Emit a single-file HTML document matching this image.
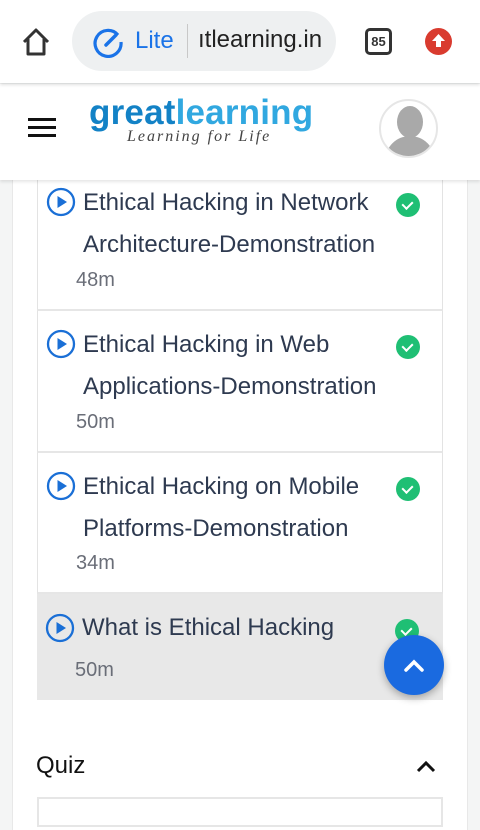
<!DOCTYPE html>
<html><head><meta charset="utf-8"><style>
*{margin:0;padding:0;box-sizing:border-box}
body{width:480px;height:815px;overflow:hidden;background:#f4f5f5;font-family:"Liberation Sans",sans-serif;position:relative}
.bar{position:absolute;left:0;top:0;width:480px;height:83px;background:#fff;z-index:3;box-shadow:0 2px 3px rgba(0,0,0,.12)}
.url{position:absolute;left:72px;top:11px;width:264px;height:60px;border-radius:30px;background:#eef0f1}
.hdr{position:absolute;left:0;top:84px;width:480px;height:96px;background:#fff;z-index:2;box-shadow:0 2px 3px rgba(0,0,0,.1)}
.card{position:absolute;left:12px;top:170px;width:456px;height:660px;background:#fff;border-left:1px solid #e8e8e8;border-right:1px solid #e8e8e8}
.list{position:absolute;left:37px;top:170px;width:406px}
.item{position:relative;border:1px solid #e3e3e3;border-top:none;border-bottom:2px solid #e6e6e6}
.t{position:absolute;left:45px;font-size:24px;color:#2e3a50;line-height:42px;white-space:nowrap}
.d{position:absolute;left:38px;font-size:20px;color:#6a6e78}
.play{position:absolute;left:8px;width:30px;height:30px}
.chk{position:absolute;left:358px;width:24px;height:24px;border-radius:50%;background:#1fbf74}
.chk:after{content:"";position:absolute;left:8px;top:6px;width:5px;height:8px;border:solid #fff;border-width:0 2px 2px 0;transform:rotate(45deg)}
</style></head><body>
<div class="bar">
<svg style="position:absolute;left:20px;top:26px" width="32" height="32" viewBox="0 0 32 32"><path d="M4 16 L16 4 L28 16 M8 13 V28 H24 V13" fill="none" stroke="#333" stroke-width="3" stroke-linejoin="round"/></svg>
<div class="url">
<svg style="position:absolute;left:20px;top:15px" width="32" height="32" viewBox="0 0 32 32"><path d="M26 9 A13 13 0 1 0 29 16" fill="none" stroke="#1a73e8" stroke-width="3.2"/><path d="M14 19 L24 9" stroke="#1a73e8" stroke-width="3.5" stroke-linecap="round"/></svg>
<span style="position:absolute;left:63px;top:16px;font-size:24px;color:#1a73e8">Lite</span>
<div style="position:absolute;left:115px;top:13px;width:1px;height:34px;background:#c8c8c8"></div>
<span style="position:absolute;left:126px;top:15px;font-size:24px;color:#222">ıtlearning.in</span>
</div>
<div style="position:absolute;left:365px;top:28px;width:27px;height:27px;border:3px solid #333;border-radius:5px;font-size:13px;font-weight:bold;text-align:center;line-height:21px;color:#333">85</div>
<div style="position:absolute;left:425px;top:28px;width:27px;height:27px;border-radius:50%;background:#d93b2f"><svg width="27" height="27" viewBox="0 0 27 27"><path d="M13.5 6 L20 13 H16 V19 H11 V13 H7 Z" fill="#fff"/></svg></div>
</div>
<div class="hdr">
<div style="position:absolute;left:28px;top:34px;width:28px;height:3px;background:#111;box-shadow:0 8px 0 #111,0 16px 0 #111"></div>
<div style="position:absolute;left:89px;top:9px;font-size:35px;font-weight:bold;letter-spacing:0.2px;color:#1382c6">great<span style="color:#31a8e0">learning</span></div>
<div style="position:absolute;left:127px;top:44px;font-family:'Liberation Serif',serif;font-style:italic;font-size:16px;letter-spacing:2px;color:#444">Learning for Life</div>
<div style="position:absolute;left:379px;top:15px;width:59px;height:59px;border-radius:50%;border:2px solid #e6e6e6;overflow:hidden;background:#fff">
<div style="position:absolute;left:16px;top:5px;width:26px;height:32px;border-radius:50%;background:#a9a9a9"></div>
<div style="position:absolute;left:4px;top:35px;width:50px;height:30px;border-radius:25px 25px 0 0;background:#a9a9a9"></div></div>
</div>
<div class="card"></div>
<div class="list">
<div class="item" style="height:141px">
<svg class="play" style="top:17px" viewBox="0 0 30 30"><circle cx="15" cy="15" r="13" fill="none" stroke="#1a6fd6" stroke-width="2.3"/><path d="M11.5 9 L21 15 L11.5 21Z" fill="#1a6fd6"/></svg>
<div class="t" style="top:12px">Ethical Hacking in Network<br>Architecture-Demonstration</div>
<div class="d" style="top:99px">48m</div><div class="chk" style="top:23px"></div></div>
<div class="item" style="height:142px">
<svg class="play" style="top:18px" viewBox="0 0 30 30"><circle cx="15" cy="15" r="13" fill="none" stroke="#1a6fd6" stroke-width="2.3"/><path d="M11.5 9 L21 15 L11.5 21Z" fill="#1a6fd6"/></svg>
<div class="t" style="top:13px">Ethical Hacking in Web<br>Applications-Demonstration</div>
<div class="d" style="top:100px">50m</div><div class="chk" style="top:24px"></div></div>
<div class="item" style="height:141px">
<svg class="play" style="top:18px" viewBox="0 0 30 30"><circle cx="15" cy="15" r="13" fill="none" stroke="#1a6fd6" stroke-width="2.3"/><path d="M11.5 9 L21 15 L11.5 21Z" fill="#1a6fd6"/></svg>
<div class="t" style="top:13px">Ethical Hacking on Mobile<br>Platforms-Demonstration</div>
<div class="d" style="top:99px">34m</div><div class="chk" style="top:24px"></div></div>
<div class="item" style="height:106px;background:#e8e8e8;border:none">
<svg class="play" style="top:19px" viewBox="0 0 30 30"><circle cx="15" cy="15" r="13" fill="none" stroke="#1a6fd6" stroke-width="2.3"/><path d="M11.5 9 L21 15 L11.5 21Z" fill="#1a6fd6"/></svg>
<div class="t" style="top:13px">What is Ethical Hacking</div>
<div class="d" style="top:65px">50m</div><div class="chk" style="top:25px"></div></div>
</div>
<div style="position:absolute;left:384px;top:635px;width:60px;height:60px;border-radius:50%;background:#1a6ae0;box-shadow:0 3px 8px rgba(0,0,0,.3)"><svg width="60" height="60" viewBox="0 0 60 60"><path d="M22 35 L30 27 L38 35" fill="none" stroke="#fff" stroke-width="3.5" stroke-linecap="round"/></svg></div>
<div style="position:absolute;left:36px;top:752px;font-size:24px;color:#111">Quiz</div>
<svg style="position:absolute;left:414px;top:756px" width="24" height="20" viewBox="0 0 24 20"><path d="M4 15 L12 7 L20 15" fill="none" stroke="#111" stroke-width="3"/></svg>
<div style="position:absolute;left:37px;top:797px;width:406px;height:30px;border:2px solid #e6e6e6"></div>
</body></html>
